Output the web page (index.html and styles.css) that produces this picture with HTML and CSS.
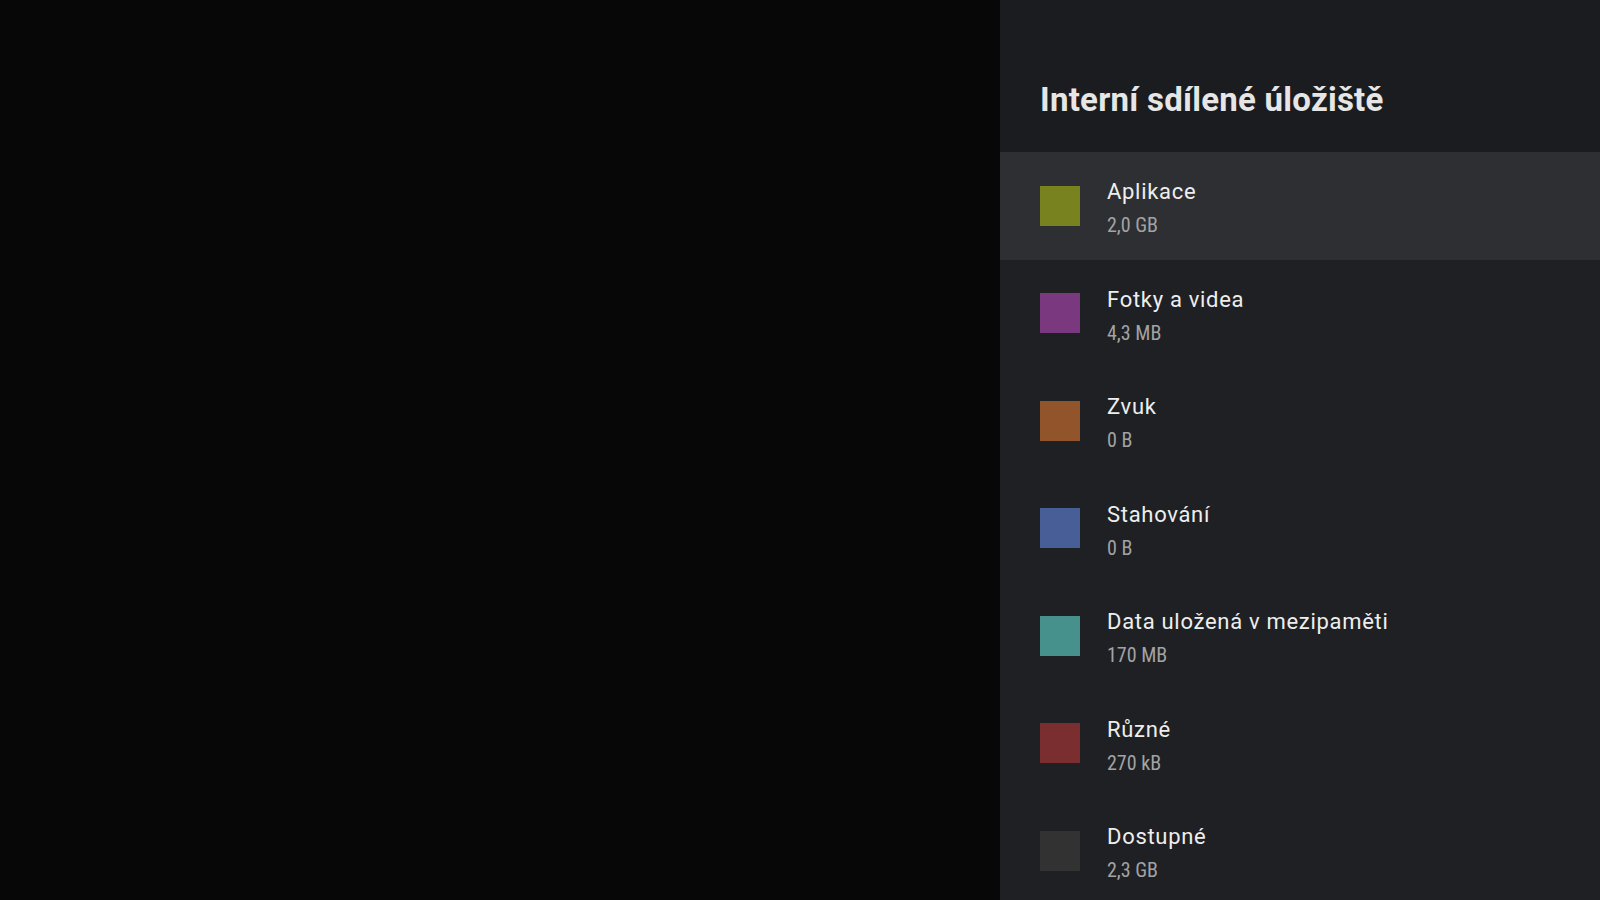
FILE: index.html
```html
<!DOCTYPE html>
<html lang="cs">
<head>
    <meta charset="UTF-8">
    <meta name="viewport" content="width=device-width, initial-scale=1.0">
    <title>Interní sdílené úložiště</title>
    <link rel="stylesheet" href="styles.css">
</head>
<body>

    <div class="backdrop"></div>

    <div class="side-panel">
        <div class="panel-header">
            <h1>Interní sdílené úložiště</h1>
        </div>

        <ul class="storage-list">
            <li class="storage-item selected">
                <span class="swatch swatch-apps"></span>
                <div class="item-text">
                    <div class="item-title">Aplikace</div>
                    <div class="item-size">2,0 GB</div>
                </div>
            </li>
            <li class="storage-item">
                <span class="swatch swatch-photos"></span>
                <div class="item-text">
                    <div class="item-title">Fotky a videa</div>
                    <div class="item-size">4,3 MB</div>
                </div>
            </li>
            <li class="storage-item">
                <span class="swatch swatch-audio"></span>
                <div class="item-text">
                    <div class="item-title">Zvuk</div>
                    <div class="item-size">0 B</div>
                </div>
            </li>
            <li class="storage-item">
                <span class="swatch swatch-downloads"></span>
                <div class="item-text">
                    <div class="item-title">Stahování</div>
                    <div class="item-size">0 B</div>
                </div>
            </li>
            <li class="storage-item">
                <span class="swatch swatch-cache"></span>
                <div class="item-text">
                    <div class="item-title">Data uložená v mezipaměti</div>
                    <div class="item-size">170 MB</div>
                </div>
            </li>
            <li class="storage-item">
                <span class="swatch swatch-misc"></span>
                <div class="item-text">
                    <div class="item-title">Různé</div>
                    <div class="item-size">270 kB</div>
                </div>
            </li>
            <li class="storage-item">
                <span class="swatch swatch-free"></span>
                <div class="item-text">
                    <div class="item-title">Dostupné</div>
                    <div class="item-size">2,3 GB</div>
                </div>
            </li>
        </ul>
    </div>

</body>
</html>
```

FILE: styles.css
```css
html, body {
    margin: 0;
    height: 100%;
}
body {
    font-family: Roboto, "Noto Sans", Arial, sans-serif;
    background-color: #070707;
    display: flex;
    overflow: hidden;
}
.backdrop {
    flex: 1;
    background-color: #070707;
}
.side-panel {
    width: 600px;
    height: 900px;
    background-color: #1f2023;
    overflow: hidden;
}
.panel-header {
    height: 152px;
    box-sizing: border-box;
    padding: 79px 0 0 40px;
    background-color: #1b1c1f;
}
h1 {
    margin: 0;
    font-size: 33px;
    line-height: 41px;
    font-weight: 700;
    letter-spacing: 0.25px;
    color: #e6e6e6;
}
.storage-list {
    list-style: none;
    margin: 0;
    padding: 0;
}
.storage-item {
    height: 107.5px;
    display: flex;
    align-items: center;
    padding-left: 40px;
}
.storage-item.selected {
    background-color: #2e2f33;
}
.swatch {
    width: 40px;
    height: 40px;
    flex-shrink: 0;
    margin-right: 27px;
}
.swatch-apps { background-color: #78821f; }
.swatch-photos { background-color: #7a397f; }
.swatch-audio { background-color: #92552b; }
.swatch-downloads { background-color: #485e97; }
.swatch-cache { background-color: #47918d; }
.swatch-misc { background-color: #7b2e2f; }
.swatch-free { background-color: #323232; }
.item-text {
    margin-top: 5px;
}
.item-title {
    font-size: 22px;
    line-height: 28px;
    letter-spacing: 0.7px;
    color: #eeeeee;
}
.item-size {
    margin-top: 7px;
    font-family: "Roboto Condensed", Roboto, Arial, sans-serif;
    font-size: 20px;
    line-height: 25px;
    color: #a3a3a3;
}
```
